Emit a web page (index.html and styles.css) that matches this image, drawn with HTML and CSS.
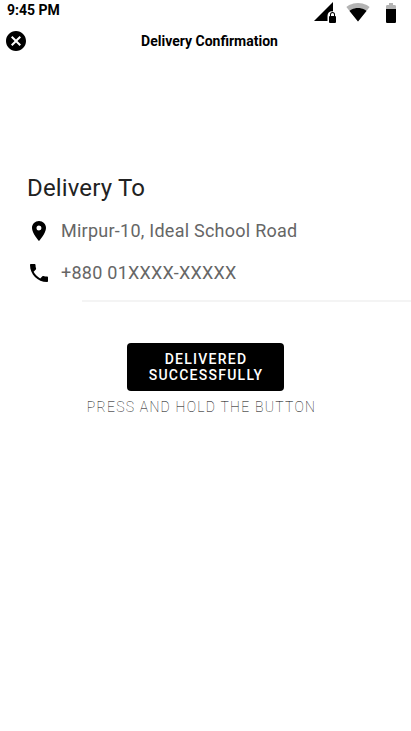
FILE: index.html
```html
<!DOCTYPE html>
<html lang="en">
<head>
<meta charset="utf-8">
<title>Delivery Confirmation</title>
<link rel="stylesheet" href="styles.css">
</head>
<body>
<div class="status">
  <span class="time">9:45 PM</span>
  <div class="status-icons">
    <svg class="signal" width="24" height="24" viewBox="0 0 24 24"><path d="M1 21L20 2V11.5C17 10.8 14.5 13 14.5 16V21Z"/><path fill-rule="evenodd" d="M22 16V14.6a2.5 2.5 0 0 0-5 0V16a1 1 0 0 0-1 1v5a1 1 0 0 0 1 1h5a1 1 0 0 0 1-1v-5a1 1 0 0 0-1-1Zm-1 0h-3v-1.4a1.5 1.5 0 0 1 3 0Z"/></svg>
    <svg class="wifi" width="24" height="24" viewBox="0 0 24 24"><path class="faint" d="M12.010 21.490L23.640 7c-.45-.34-4.930-4-11.640-4C5.280 3 .81 6.660.36 7l11.630 14.490z"/><path d="M3.530 10.950L12 21.500l8.470-10.550C20.040 10.620 16.810 8 12 8c-4.810 0-8.040 2.620-8.470 2.950z"/></svg>
    <svg class="battery" width="24" height="24" viewBox="0 0 24 24"><path class="faint" d="M17 9V6.300C17 5.600 16.400 5 15.700 5H14V3h-4v2H8.300C7.600 5 7 5.600 7 6.300V9Z"/><path d="M7 9h10v12.700c0 .7-.6 1.300-1.300 1.300H8.300C7.600 23 7 22.400 7 21.700Z"/></svg>
  </div>
</div>
<header class="appbar">
  <svg class="close" width="24" height="24" viewBox="0 0 24 24"><path d="M12 2C6.470 2 2 6.470 2 12s4.470 10 10 10 10-4.470 10-10S17.530 2 12 2zm5 13.590L15.590 17 12 13.410 8.410 17 7 15.590 10.590 12 7 8.410 8.410 7 12 10.590 15.590 7 17 8.410 13.410 12 17 15.590z"/></svg>
  <h1>Delivery Confirmation</h1>
</header>
<main>
  <section class="details">
    <h2>Delivery To</h2>
    <div class="row">
      <svg width="24" height="24" viewBox="0 0 24 24"><path d="M12 2C8.130 2 5 5.130 5 9c0 5.250 7 13 7 13s7-7.750 7-13c0-3.870-3.130-7-7-7zm0 9.500a2.500 2.500 0 1 1 0-5 2.500 2.500 0 0 1 0 5z"/></svg>
      <span class="address">Mirpur-10, Ideal School Road</span>
    </div>
    <div class="row">
      <svg width="24" height="24" viewBox="0 0 24 24"><path d="M6.620 10.790c1.440 2.830 3.760 5.140 6.590 6.590l2.200-2.200c.27-.27.67-.36 1.020-.24 1.120.37 2.330.57 3.570.57.55 0 1 .45 1 1V20c0 .55-.45 1-1 1-9.390 0-17-7.610-17-17 0-.55.45-1 1-1h3.500c.55 0 1 .45 1 1 0 1.250.2 2.450.57 3.570.11.35.03.74-.25 1.020l-2.200 2.200z"/></svg>
      <span class="phone">+880 01XXXX-XXXXX</span>
    </div>
  </section>
  <div class="divider"></div>
  <section class="action">
    <button type="button">DELIVERED<br>SUCCESSFULLY</button>
    <p>PRESS AND HOLD THE BUTTON</p>
  </section>
</main>
</body>
</html>
```
FILE: styles.css
```css
* { box-sizing: border-box; }
body {
  margin: 0;
  min-height: 731px;
  background: #fff;
  color: #000;
  font-family: Roboto, sans-serif;
}
svg { display: block; flex: none; }
.faint { fill: #b3b3b3; }
.status {
  display: flex;
  justify-content: space-between;
  height: 25px;
  padding: 0 8px 0 7px;
}
.time {
  padding-top: 2px;
  font-size: 14px;
  line-height: 16px;
  font-weight: 700;
}
.status-icons { display: flex; gap: 9px; }
.appbar {
  display: grid;
  grid-template-columns: 24px 1fr 24px;
  align-items: center;
  height: 32px;
  padding: 0 0 0 4px;
}
h1 {
  margin: 0;
  text-align: center;
  font-size: 14px;
  line-height: 16px;
  font-weight: 700;
  padding-left: 4px;
}
.details { padding: 116px 27px 0; }
h2 {
  margin: 0 0 9px;
  font-size: 24px;
  line-height: 28px;
  font-weight: 400;
  color: #222;
  padding-top: 1px;
  letter-spacing: 0.15px;
}
.row {
  display: flex;
  align-items: center;
  gap: 10px;
  height: 42px;
  margin-top: -1px;
  font-size: 18px;
  color: #666;
  letter-spacing: 0.25px;
}
.row span { padding-bottom: 2px; }
.row + .row { margin-top: 0; }
.divider {
  height: 2px;
  margin: 6px 0 0 82px;
  background: #f4f4f4;
}
.action {
  display: flex;
  flex-direction: column;
  align-items: center;
  padding-top: 41px;
}
button {
  width: 157px;
  height: 48px;
  padding: 0 0 0 1px;
  border: 0;
  border-radius: 4px;
  background: #000;
  color: #fff;
  font: 500 14px/16px Roboto, sans-serif;
  letter-spacing: 1.25px;
}
.action p {
  margin: 8px 0 0;
  padding-right: 8px;
  font-size: 14px;
  line-height: 16px;
  font-weight: 100;
  letter-spacing: 1.25px;
  color: #000;
}
```
